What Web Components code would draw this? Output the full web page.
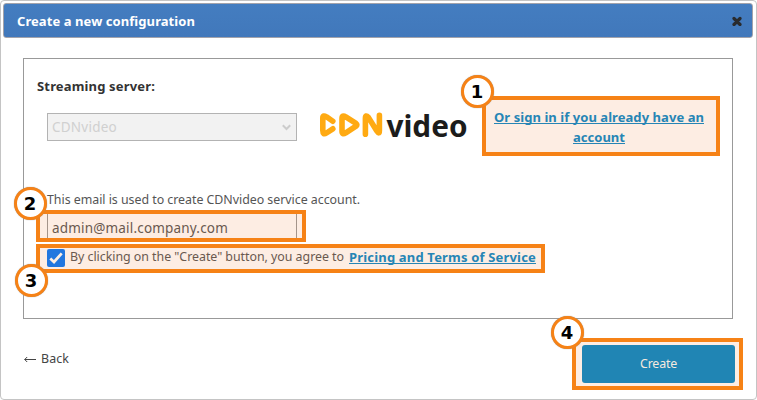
<!DOCTYPE html>
<html lang="en"><head><meta charset="utf-8"><title>Create a new configuration</title>
<style>html,body{margin:0;background:#fff}body{width:757px;height:400px;overflow:hidden;font-family:"Noto Sans","Open Sans",sans-serif;font-size:12.4px;color:#555}</style></head>
<body><config-dialog></config-dialog>
<script>
class BaseEl extends HTMLElement{
  constructor(){super();this.attachShadow({mode:'open'});}
  draw(html){this.shadowRoot.innerHTML=html;}
}
/* One line of text, tracked so that it fills the width given in "w". */
customElements.define('text-line',class extends BaseEl{
  connectedCallback(){
    this.draw('<style>:host{display:inline-block;white-space:nowrap;line-height:16px}span{display:inline-block}</style><span><slot></slot></span>');
    const s=this.shadowRoot.querySelector('span'),w=+this.getAttribute('w');
    requestAnimationFrame(()=>{const n=this.textContent.length;s.style.letterSpacing=(w-s.getBoundingClientRect().width)/n+'px';});
  }
});
customElements.define('title-bar',class extends BaseEl{
  connectedCallback(){this.draw(`<style>:host{display:flex;align-items:center;justify-content:space-between;box-sizing:border-box;height:35px;padding:0 10px 0 13px;border:1px solid #a3a3ab;border-radius:3px;background:linear-gradient(#447dc0,#4178bb);color:#fff;font-weight:700;font-size:13px}svg{display:block}</style><slot></slot><svg width="10" height="10" viewBox="0 0 10 10"><path d="M2 2L8 8M8 2L2 8" transform="translate(0 .5)" stroke="#292b2e" stroke-width="3.2" stroke-linecap="round"/></svg>`);}
});
customElements.define('server-select',class extends BaseEl{
  connectedCallback(){this.draw(`<style>:host{display:flex;align-items:center;justify-content:space-between;box-sizing:border-box;width:250px;height:28px;padding:0 5px 0 4px;border:1px solid #b3b3b3;background:#f2f2f2;color:#d0d0d0;font-size:13.5px}</style><slot></slot><svg width="9" height="7" viewBox="0 0 9 7"><path d="M.8 1.3L4.5 5L8.2 1.3" fill="none" stroke="#ccc" stroke-width="2"/></svg>`);}
});
customElements.define('cdn-logo',class extends BaseEl{
  connectedCallback(){this.draw(`<style>:host{display:block;width:150px;height:50px}svg{display:block}</style><svg width="150" height="50" viewBox="318 100 150 50"><g fill="none" stroke="#ffaa12" stroke-width="5.6" stroke-linejoin="round" stroke-linecap="round"><path d="M332.8 121.2L326.5 116.8Q322.8 114.6 322.8 118V130.5Q322.8 135.4 326.5 133L332.8 128.8"/><path d="M342 118.5V131.3Q342 135 345.8 132.8L356 126.2Q357.8 124.8 356 123.4L345.8 116.8Q342 114.6 342 118.5Z"/><path d="M365.4 134.2V118.5Q365.4 114 368.4 117.4L376.7 130.8Q379.4 135 379.4 130.5V115.4"/></g><text x="386.5" y="136.5" font-family="Noto Sans,sans-serif" font-weight="700" font-size="30" textLength="81" lengthAdjust="spacingAndGlyphs" fill="#1c1c1b">video</text></svg>`);}
});
customElements.define('email-field',class extends BaseEl{
  connectedCallback(){this.draw(`<style>:host{display:flex;align-items:center;box-sizing:border-box;width:250px;height:28px;padding:0 5px 0 4px;border:1px solid #999;color:#555;font-size:13.5px}</style><slot></slot>`);}
});
customElements.define('check-mark',class extends BaseEl{
  connectedCallback(){this.draw(`<style>:host{display:block;position:relative;z-index:2;width:18px;height:18px}svg{display:block}</style><svg width="18" height="18" viewBox="0 0 18 18"><rect width="18" height="18" rx="2" fill="#2277df"/><path d="M3.3 9.5L7 13L14.7 4.3" fill="none" stroke="#fdeee3" stroke-width="2.7"/></svg>`);}
});
customElements.define('link-text',class extends BaseEl{
  connectedCallback(){this.draw(`<style>:host{display:block;position:relative;z-index:2;height:16px;color:#2685b5;font-weight:700;font-size:13px}a{display:block;box-sizing:border-box;height:15px;border-bottom:1px solid #2685b5;line-height:16px}</style><a><slot></slot></a>`);}
});
customElements.define('create-button',class extends BaseEl{
  connectedCallback(){this.draw(`<style>:host{display:flex;align-items:center;justify-content:center;width:153px;height:38px;border-radius:3px;background:#2085b4;color:#f6e9df;position:relative;z-index:2}</style><slot></slot>`);}
});
/* Numbered callout laid over the dialog. */
customElements.define('call-out',class extends BaseEl{
  connectedCallback(){
    const [x,y,w,h,cx,cy]=this.getAttribute('at').split(' ').map(Number);
    this.draw(`<style>:host{position:absolute;left:${x-1}px;top:${y-1}px;width:${w}px;height:${h}px;box-sizing:border-box;border:4px solid #f68216;background:rgba(242,120,42,.135);background-clip:padding-box;z-index:1}
    b{position:absolute;left:${cx-x-4-16.5}px;top:${cy-y-4-16.5}px;width:33px;height:33px;box-sizing:border-box;border:3px solid #f68216;border-radius:50%;background:#fff;color:#000;box-shadow:0 0 1px #888;display:flex;align-items:center;justify-content:center;font:700 18px/27px "DejaVu Sans",sans-serif}span{display:block}</style><b><span><slot></slot></span></b>`);
  }
});
customElements.define('config-dialog',class extends BaseEl{
  connectedCallback(){this.draw(`<style>
  :host{display:block;position:relative;box-sizing:border-box;width:757px;height:400px;border:1px solid #c4c4c4;border-radius:4px;padding:2px 3px 0 2px}
  .panel{box-sizing:border-box;width:710px;height:261px;margin:20px 0 0 20px;border:1px solid #999;padding:18px 0 0 13px}
  .head{color:#333;font-weight:700;font-size:13px;height:16px}
  .server{display:flex;height:54px;margin:11px 0 0 10px}
  server-select{margin-top:9px}cdn-logo{margin:-4px 0 0 21px}
  .sign{display:flex;flex-direction:column;align-items:center;gap:4px;width:210px;margin:5px 0 0 26px}
  .note{height:16px;margin:33px 0 0 10px}
  email-field{margin:6px 0 0 10px;padding-top:2px}
  .agree{display:flex;height:18px;margin:8px 0 0 10px}.agree text-line{margin:0 0 0 5px}.agree link-text{margin:0 0 0 5px}.agree link-text text-line{margin:0}
  .foot{display:flex;justify-content:space-between;margin:26px 18px 0 21px}
  .back{display:flex;align-items:center;gap:5px;height:16px;margin-top:6px;color:#444}
  </style>
  <title-bar><text-line w="178">Create a new configuration</text-line></title-bar>
  <div class="panel"><div class="head"><text-line w="118">Streaming server:</text-line></div>
  <div class="server"><server-select><text-line w="65">CDNvideo</text-line></server-select><cdn-logo></cdn-logo>
  <div class="sign"><link-text><text-line w="210">Or sign in if you already have an</text-line></link-text><link-text><text-line w="52">account</text-line></link-text></div></div>
  <div class="note"><text-line w="313">This email is used to create CDNvideo service account.</text-line></div>
  <email-field><text-line w="176">admin@mail.company.com</text-line></email-field>
  <div class="agree"><check-mark></check-mark><text-line w="274">By clicking on the "Create" button, you agree to</text-line><link-text><text-line w="187">Pricing and Terms of Service</text-line></link-text></div></div>
  <div class="foot"><div class="back"><svg width="12" height="7" viewBox="0 0 12 7"><path d="M.7 3.5H12M3.2 1L.7 3.5L3.2 6" fill="none" stroke="#444"/></svg><text-line w="28">Back</text-line></div><create-button><text-line w="37">Create</text-line></create-button></div>
  <call-out at="482 96 238 60 477 91">1</call-out><call-out at="36 210 270 32 30 203">2</call-out><call-out at="36 244 509 29 31 280">3</call-out><call-out at="572 338 171 52 567 332">4</call-out>`);}
});
</script></body></html>
